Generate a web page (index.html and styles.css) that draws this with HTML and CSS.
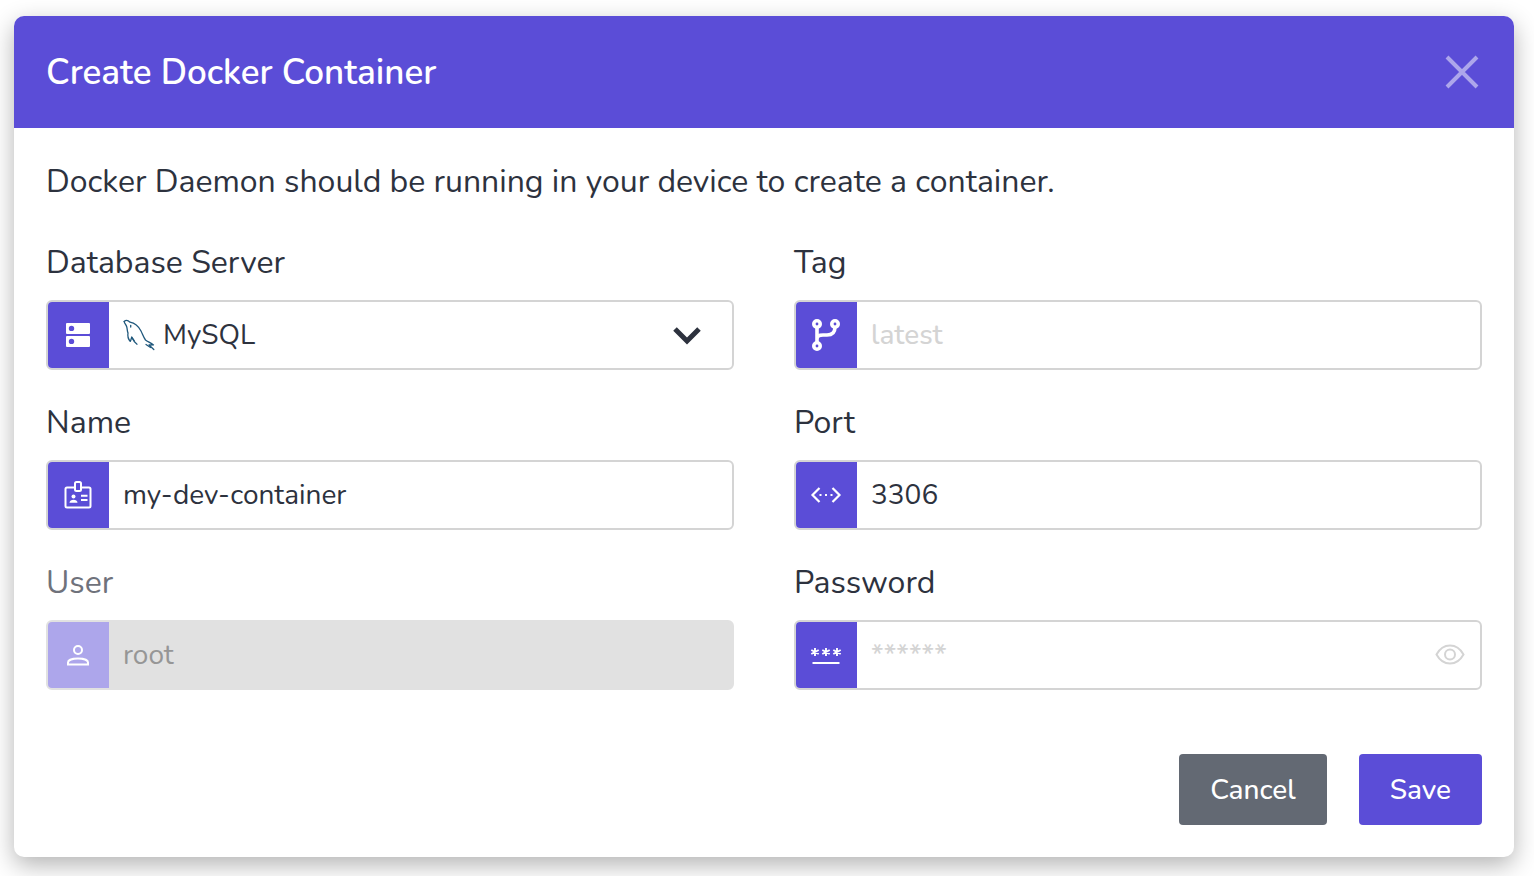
FILE: index.html
```html
<!DOCTYPE html>
<html lang="en">
<head>
<meta charset="utf-8">
<meta name="viewport" content="width=device-width, initial-scale=1">
<title>Create Docker Container</title>
<link rel="stylesheet" href="styles.css">
</head>
<body>
<main class="modal" role="dialog" aria-labelledby="modal-title">
  <header class="modal-header">
    <h1 class="modal-title" id="modal-title">Create Docker Container</h1>
    <button class="close-button" type="button" aria-label="Close">
      <svg class="close-icon" viewBox="0 0 36 36" aria-hidden="true"><path d="M3 3 33 33M33 3 3 33" fill="none" stroke="currentColor" stroke-width="4"/></svg>
    </button>
  </header>
  <form class="modal-body">
    <p class="intro">Docker Daemon should be running in your device to create a container.</p>
    <div class="fields">
      <div class="field">
        <label class="label" for="server">Database Server</label>
        <div class="control">
          <span class="addon">
            <svg class="icon" viewBox="0 0 32 32" aria-hidden="true"><path fill="#fff" fill-rule="evenodd" d="M5 4h22a1 1 0 0 1 1 1v9a1 1 0 0 1-1 1H5a1 1 0 0 1-1-1V5a1 1 0 0 1 1-1Zm4.500 2.700a2.700 2.700 0 1 0 0 5.400a2.700 2.700 0 0 0 0-5.400ZM5 17h22a1 1 0 0 1 1 1v9a1 1 0 0 1-1 1H5a1 1 0 0 1-1-1v-9a1 1 0 0 1 1-1Zm4.500 2.700a2.700 2.700 0 1 0 0 5.400a2.700 2.700 0 0 0 0-5.400Z"/></svg>
          </span>
          <svg class="dolphin" viewBox="0 0 32 32" aria-hidden="true"><g fill="none" stroke="#20587c" stroke-width="1.300" stroke-linejoin="round" stroke-linecap="round"><path d="M1.200 2.500C3 .8 5.200 1.400 7 3.200c4.600.9 8.600 4.300 11 8.800 1.600 3.200 2.600 6.500 4.500 9 2 1.700 5 2.600 8 4.900l-4.500.1 4.800 4.500"/><path d="M1.200 2.500c.3 2 1.900 3.300 2.500 5.200.7 2.300.3 3.700 1.300 6.300-.6 3.200.4 6.200 2.200 8.400.8-.7.800-2.700 1.500-4.200 1.200 2.500 2.800 5.200 5.300 7"/><path d="m8.700 18.200 2.500 3.500M23 25.500l4.500 3"/><path d="M7.700 6.500v1.600"/></g></svg>
          <select class="input select" id="server"><option>MySQL</option></select>
          <svg class="chevron" viewBox="0 0 32 32" aria-hidden="true"><path d="m4 10 12 12L28 10" fill="none" stroke="currentColor" stroke-width="5"/></svg>
        </div>
      </div>
      <div class="field">
        <label class="label" for="tag">Tag</label>
        <div class="control">
          <span class="addon">
            <svg class="icon" viewBox="0 0 32 32" aria-hidden="true"><g fill="none" stroke="#fff" stroke-width="3.600"><circle cx="7" cy="5" r="3.200"/><circle cx="25" cy="5" r="3.200"/><circle cx="7" cy="27" r="3.200"/><path d="M7 8v16M25 8c0 6-3 8-8 8h-4c-4 0-6 1-6 4"/></g></svg>
          </span>
          <input class="input" id="tag" type="text" placeholder="latest">
        </div>
      </div>
      <div class="field">
        <label class="label" for="name">Name</label>
        <div class="control">
          <span class="addon">
            <svg class="icon" viewBox="0 0 32 32" aria-hidden="true"><g fill="none" stroke="#fff" stroke-width="2"><path d="M13 8.500H5a1.500 1.500 0 0 0-1.500 1.500v17A1.500 1.500 0 0 0 5 28.500h22a1.500 1.500 0 0 0 1.500-1.500V10A1.500 1.500 0 0 0 27 8.500h-8"/><rect x="13" y="3" width="6" height="9" rx="1.500"/><path d="M19 16.800h6.500M19 21h6.500"/></g><circle cx="11.500" cy="17.500" r="2" fill="#fff"/><path fill="#fff" d="M7.500 23.800c0-4 8-4 8 0Z"/></svg>
          </span>
          <input class="input" id="name" type="text" value="my-dev-container">
        </div>
      </div>
      <div class="field">
        <label class="label" for="port">Port</label>
        <div class="control">
          <span class="addon">
            <svg class="icon" viewBox="0 0 32 32" aria-hidden="true"><path d="m9.500 9-7 7 7 7M22.500 9l7 7-7 7" fill="none" stroke="#fff" stroke-width="2.200"/><path d="M9.500 15h2v2h-2zM15 15h2v2h-2zM20.500 15h2v2h-2z" fill="#fff"/></svg>
          </span>
          <input class="input" id="port" type="text" inputmode="numeric" value="3306">
        </div>
      </div>
      <div class="field field-disabled">
        <label class="label" for="user">User</label>
        <div class="control">
          <span class="addon">
            <svg class="icon" viewBox="0 0 32 32" aria-hidden="true"><g fill="none" stroke="#fff" stroke-width="2"><circle cx="16" cy="11" r="4"/><path d="M6 25.500v-2c0-5.400 20-5.400 20 0v2Z"/></g></svg>
          </span>
          <input class="input" id="user" type="text" value="root" disabled>
        </div>
      </div>
      <div class="field">
        <label class="label" for="password">Password</label>
        <div class="control">
          <span class="addon">
            <svg class="icon" viewBox="0 0 32 32" aria-hidden="true"><g fill="none" stroke="#fff" stroke-width="1.900"><path d="M5 9v8M1.300 11l7.400 4M8.700 11l-7.400 4M16 9v8M12.300 11l7.400 4M19.700 11l-7.400 4M27 9v8M23.300 11l7.400 4M30.700 11l-7.400 4"/><path d="M2.500 24h27" stroke-width="2"/></g></svg>
          </span>
          <input class="input" id="password" type="text" placeholder="******" autocomplete="off">
          <button class="reveal-button" type="button" aria-label="Show password">
            <svg class="icon" viewBox="0 0 32 32" aria-hidden="true"><g fill="none" stroke="currentColor" stroke-width="2"><path d="M2.500 15.500C5.500 10 10 6.500 16 6.500s10.500 3.500 13.500 9C26.500 21 22 24.500 16 24.500S5.500 21 2.500 15.500Z"/><circle cx="16" cy="15.500" r="5"/></g></svg>
          </button>
        </div>
      </div>
    </div>
    <div class="actions">
      <button class="button button-secondary" type="button">Cancel</button>
      <button class="button button-primary" type="submit">Save</button>
    </div>
  </form>
</main>
</body>
</html>
```
FILE: styles.css
```css
:root {
  --primary: #5b4dd7;
  --text: #2d323e;
  --line: #d4d4d4;
}

* {
  box-sizing: border-box;
}

body {
  margin: 0;
  padding: 16px 20px 19px 14px;
  background: #fff;
  color: var(--text);
  font-family: Nunito, "Open Sans", "Noto Sans", sans-serif;
  font-size: 28px;
}

button,
input,
select {
  font: inherit;
}

svg {
  display: block;
  flex: none;
}

.modal {
  border-radius: 10px;
  background: #fff;
  box-shadow: 0 8px 24px rgba(0, 0, 0, 0.3);
}

.modal-header {
  display: flex;
  align-items: center;
  justify-content: space-between;
  padding: 32px 32px 30px;
  border-radius: 10px 10px 0 0;
  background: var(--primary);
  color: #fff;
}

.modal-title {
  margin: 0;
  font-size: 35px;
  font-weight: 600;
  line-height: 50px;
}

.close-button {
  padding: 0 2px 2px;
  border: 0;
  background: none;
  color: #ada6eb;
}

.close-icon {
  width: 36px;
  height: 36px;
}

.modal-body {
  padding: 32px;
}

.intro {
  margin: 0 0 36px;
  font-size: 32px;
  line-height: 44px;
}

.fields {
  display: grid;
  grid-template-columns: 1fr 1fr;
  gap: 30px 60px;
}

.label {
  display: block;
  margin-bottom: 14px;
  font-size: 32px;
  line-height: 46px;
}

.control {
  display: flex;
  align-items: center;
  height: 70px;
  border: 2px solid var(--line);
  border-radius: 6px;
  background: #fff;
}

.addon {
  display: flex;
  align-items: center;
  align-self: stretch;
  flex: none;
  width: 61px;
  padding-left: 14px;
  border-radius: 4px 0 0 4px;
  background: var(--primary);
}

.icon {
  width: 32px;
  height: 32px;
}

.input {
  flex: 1;
  min-width: 0;
  height: 100%;
  padding: 0 14px;
  border: 0;
  outline: 0;
  background: none;
  color: inherit;
}

.input::placeholder {
  color: var(--line);
  font-weight: 500;
  opacity: 1;
}

.dolphin {
  width: 32px;
  height: 32px;
  margin-left: 14px;
}

.select {
  padding: 0 8px;
  appearance: none;
}

.chevron {
  width: 32px;
  height: 32px;
  margin-right: 29px;
  pointer-events: none;
}

.reveal-button {
  margin-right: 14px;
  padding: 0;
  border: 0;
  background: none;
  color: var(--line);
}

.field-disabled .label {
  color: #6f727b;
}

.field-disabled .control {
  border-color: #e1e1e1;
  background: #e1e1e1;
}

.field-disabled .addon {
  background: #ada6eb;
}

.field-disabled .input {
  color: #969696;
}

.actions {
  display: flex;
  justify-content: flex-end;
  gap: 32px;
  margin-top: 64px;
}

.button {
  padding: 16px 31px 15px;
  border: 0;
  border-radius: 4px;
  color: #fff;
  font-weight: 500;
  line-height: 40px;
}

.button-secondary {
  background: #636973;
}

.button-primary {
  background: var(--primary);
}
```
